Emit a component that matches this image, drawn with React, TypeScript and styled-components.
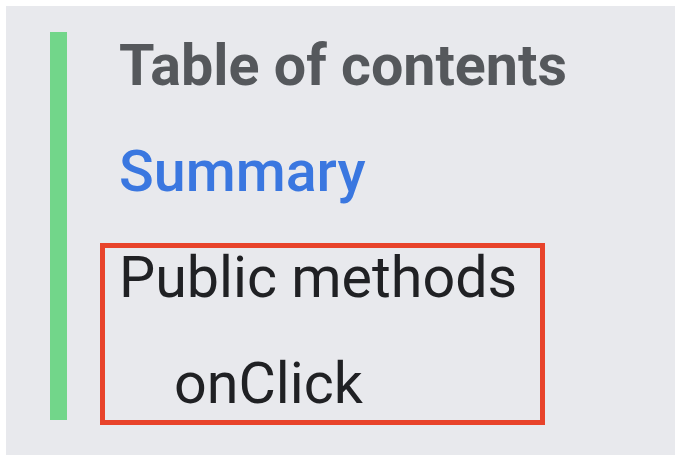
import React from "react";
import styled, { createGlobalStyle } from "styled-components";

const Global = createGlobalStyle`
  html, body { margin: 0; padding: 0; background: #ffffff; }
  body { font-family: Roboto, "Noto Sans", Arial, sans-serif; }
`;

const Page = styled.div`
  width: 680px;
  height: 460px;
  box-sizing: border-box;
  padding: 6px 5px 5px 6px;
`;

const Panel = styled.nav`
  width: 100%;
  height: 100%;
  background: #e8e9ed;
  box-sizing: border-box;
  padding: 26px 0 0 44px;
  display: flex;
  align-items: flex-start;
`;

const Toc = styled.div`
  border-left: 17px solid #72d68a;
  padding: 0 0 2px 52px;
  display: flex;
  flex-direction: column;
  gap: 38px;
`;

const Entry = styled.div<{ $variant: "title" | "link" | "plain"; $indent?: number }>`
  font-family: Roboto, "Noto Sans", Arial, sans-serif;
  font-size: 57.4px;
  line-height: 68px;
  white-space: nowrap;
  padding-left: ${(p) => p.$indent ?? 0}px;
  font-weight: ${(p) => (p.$variant === "title" ? 700 : p.$variant === "link" ? 500 : 400)};
  color: ${(p) =>
    p.$variant === "title" ? "#55585c" : p.$variant === "link" ? "#3a77e0" : "#202124"};
`;

const Group = styled.div`
  position: relative;
  display: flex;
  flex-direction: column;
  gap: 38px;
`;

const Annotation = styled.div`
  position: absolute;
  top: -1px;
  left: -19px;
  width: 445px;
  bottom: -7px;
  box-sizing: border-box;
  border: 5px solid #e8432b;
  pointer-events: none;
`;

export default function App() {
  return (
    <>
      <Global />
      <Page>
        <Panel>
          <Toc>
            <Entry $variant="title">Table of contents</Entry>
            <Entry $variant="link">Summary</Entry>
            <Group>
              <Entry $variant="plain">Public methods</Entry>
              <Entry $variant="plain" $indent={55}>onClick</Entry>
              <Annotation />
            </Group>
          </Toc>
        </Panel>
      </Page>
    </>
  );
}
